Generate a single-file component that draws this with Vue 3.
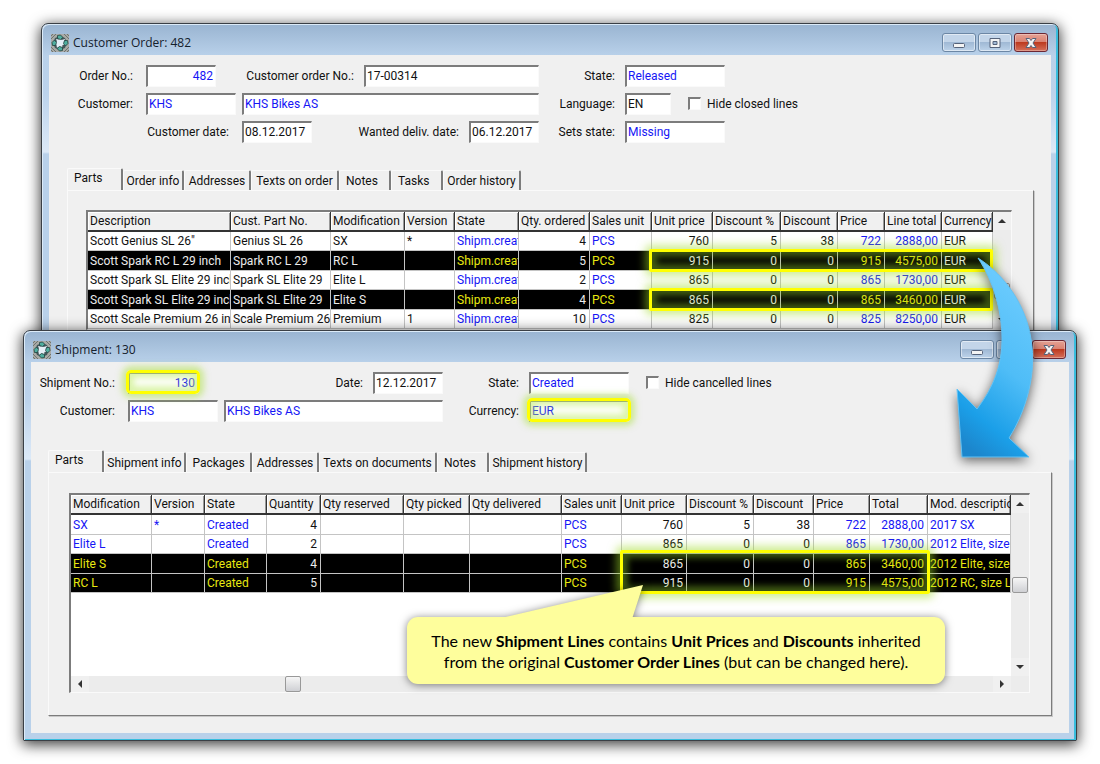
<script setup>
const orderTabs = [
  { label: 'Order info', size: 'w61' },
  { label: 'Addresses', size: 'w67' },
  { label: 'Texts on order', size: 'w88' },
  { label: 'Notes', size: 'w52 early' },
  { label: 'Tasks', size: 'w52 early' },
  { label: 'Order history', size: 'w78' },
]
const shipmentTabs = [
  { label: 'Shipment info', size: 'w82' },
  { label: 'Packages', size: 'w66' },
  { label: 'Addresses', size: 'w67' },
  { label: 'Texts on documents', size: 'w118' },
  { label: 'Notes', size: 'w52 early' },
  { label: 'Shipment history', size: 'w98' },
]

const orderColumns = [
  { title: 'Description', width: 143 },
  { title: 'Cust. Part No.', width: 100 },
  { title: 'Modification', width: 74 },
  { title: 'Version', width: 50 },
  { title: 'State', width: 64, kind: 'link' },
  { title: 'Qty. ordered', width: 71, kind: 'num' },
  { title: 'Sales unit', width: 62, kind: 'link' },
  { title: 'Unit price', width: 61, kind: 'num' },
  { title: 'Discount %', width: 68, kind: 'num' },
  { title: 'Discount', width: 57, kind: 'num' },
  { title: 'Price', width: 47, kind: 'num link' },
  { title: 'Line total', width: 57, kind: 'num link' },
  { title: 'Currency' },
]
const orderRows = [
  { cells: ['Scott Genius SL 26"', 'Genius SL 26', 'SX', '*', 'Shipm.created', '4', 'PCS', '760', '5', '38', '722', '2888,00', 'EUR'] },
  { selected: true, cells: ['Scott Spark RC L 29 inch', 'Spark RC L 29', 'RC L', '', 'Shipm.created', '5', 'PCS', '915', '0', '0', '915', '4575,00', 'EUR'] },
  { cells: ['Scott Spark SL Elite 29 inch', 'Spark SL Elite 29', 'Elite L', '', 'Shipm.created', '2', 'PCS', '865', '0', '0', '865', '1730,00', 'EUR'] },
  { selected: true, cells: ['Scott Spark SL Elite 29 inch', 'Spark SL Elite 29', 'Elite S', '', 'Shipm.created', '4', 'PCS', '865', '0', '0', '865', '3460,00', 'EUR'] },
  { cells: ['Scott Scale Premium 26 inch', 'Scale Premium 26', 'Premium', '1', 'Shipm.created', '10', 'PCS', '825', '0', '0', '825', '8250,00', 'EUR'] },
]

const shipmentColumns = [
  { title: 'Modification', width: 81, kind: 'link' },
  { title: 'Version', width: 53, kind: 'link' },
  { title: 'State', width: 62, kind: 'link' },
  { title: 'Quantity', width: 54, kind: 'num' },
  { title: 'Qty reserved', width: 83, kind: 'num' },
  { title: 'Qty picked', width: 66, kind: 'num' },
  { title: 'Qty delivered', width: 92, kind: 'num' },
  { title: 'Sales unit', width: 60, kind: 'link' },
  { title: 'Unit price', width: 65, kind: 'num' },
  { title: 'Discount %', width: 67, kind: 'num' },
  { title: 'Discount', width: 60, kind: 'num' },
  { title: 'Price', width: 56, kind: 'num link' },
  { title: 'Total', width: 58, kind: 'num link' },
  { title: 'Mod. description', kind: 'link' },
]
const shipmentRows = [
  { cells: ['SX', '*', 'Created', '4', '', '', '', 'PCS', '760', '5', '38', '722', '2888,00', '2017 SX'] },
  { cells: ['Elite L', '', 'Created', '2', '', '', '', 'PCS', '865', '0', '0', '865', '1730,00', '2012 Elite, size L'] },
  { selected: true, cells: ['Elite S', '', 'Created', '4', '', '', '', 'PCS', '865', '0', '0', '865', '3460,00', '2012 Elite, size S'] },
  { selected: true, cells: ['RC L', '', 'Created', '5', '', '', '', 'PCS', '915', '0', '0', '915', '4575,00', '2012 RC, size L'] },
]

const ringAngles = [0, 90, 180, 270]
const windowButtons = ['Minimize', 'Maximize', 'Close']
</script>

<template>
  <main class="desktop">
    <section class="window order" aria-label="Customer Order: 482">
      <header class="titlebar">
        <svg class="app-icon" viewBox="0 0 18 18" aria-hidden="true">
          <rect width="18" height="18" fill="#a9aaa6" />
          <path d="M0 5l5-5M0 13l5 5M13 0l5 5M18 13l-5 5M0 2l2-2M16 0l2 2M0 16l2 2M18 16l-2 2" stroke="#6d7472" stroke-width="1" />
          <path d="M9 2l5 2 2 5-2 5-5 2-5-2-2-5 2-5z" fill="#43575a" />
          <path d="M9 4l1.500 2L14 5l-1 3.500 1.500 2-3 .5L11 14l-2-1.500L6 14l-.5-3L3.500 9 6 7.500 5 5l3 .5z" fill="#e4eef6" />
          <g v-for="a in ringAngles" :key="a" :transform="`rotate(${a} 9 9)`">
            <path d="M6.500 1.500l3-.5 2.500 2.500L9.500 5.500 6.500 4.500z" fill="#4fae9f" stroke="#22403f" stroke-width=".8" />
          </g>
        </svg>
        <h1>Customer Order: 482</h1>
        <div class="controls">
          <button v-for="b in windowButtons" :key="b" type="button" :class="b.toLowerCase()" :aria-label="b">
            <svg viewBox="0 0 14 12" aria-hidden="true">
              <rect v-if="b === 'Minimize'" x="1.500" y="6.500" width="11" height="4" rx="1" class="glyph" />
              <path v-else-if="b === 'Maximize'" d="M2 1.500h10v9H2zM5 4.500v3h4v-3z" fill-rule="evenodd" class="glyph" />
              <path v-else d="M2 1.500h3.500L7 3.500l1.500-2H12L9 6l3 4.500H8.500L7 8.500l-1.500 2H2L5 6z" class="glyph" />
            </svg>
          </button>
        </div>
      </header>
      <div class="client">
        <form class="form" @submit.prevent>
          <div class="row">
            <label class="first w97" for="o-no">Order No.:</label>
            <input id="o-no" class="w70 blue right" value="482" />
            <label class="w148" for="o-cno">Customer order No.:</label>
            <input id="o-cno" class="w175" value="17-00314" />
            <label class="w86" for="o-state">State:</label>
            <input id="o-state" class="w100 blue" value="Released" />
          </div>
          <div class="row">
            <label class="first w97" for="o-cust">Customer:</label>
            <input id="o-cust" class="w90 blue" value="KHS" />
            <input class="w297 blue gap6" aria-label="Customer name" value="KHS Bikes AS" />
            <label class="w86" for="o-lang">Language:</label>
            <input id="o-lang" class="w46" value="EN" />
            <label class="check"><input type="checkbox" />Hide closed lines</label>
          </div>
          <div class="row">
            <label class="first w193" for="o-date">Customer date:</label>
            <input id="o-date" class="w70" value="08.12.2017" />
            <label class="w157" for="o-want">Wanted deliv. date:</label>
            <input id="o-want" class="w70" value="06.12.2017" />
            <label class="w86" for="o-sets">Sets state:</label>
            <input id="o-sets" class="w100 blue" value="Missing" />
          </div>
        </form>
        <nav class="tabs" aria-label="Order sections">
          <button type="button" class="tab active">Parts</button>
          <button v-for="t in orderTabs" :key="t.label" type="button" class="tab" :class="t.size">{{ t.label }}</button>
        </nav>
        <div class="panel">
          <div class="grid">
            <div class="sheet">
              <table>
                <colgroup>
                  <col v-for="c in orderColumns" :key="c.title" :style="c.width ? { width: c.width + 'px' } : null" />
                </colgroup>
                <thead>
                  <tr><th v-for="c in orderColumns" :key="c.title" scope="col">{{ c.title }}</th></tr>
                </thead>
                <tbody>
                  <tr v-for="(r, i) in orderRows" :key="i" :class="{ selected: r.selected }">
                    <td v-for="(v, j) in r.cells" :key="j" :class="orderColumns[j].kind">{{ v }}</td>
                  </tr>
                </tbody>
              </table>
            </div>
            <div class="vscroll">
              <button type="button" aria-label="Scroll up"><i class="up"></i></button>
              <span class="thumb"></span>
              <button type="button" aria-label="Scroll down"><i class="down"></i></button>
            </div>
            <div class="mark line-one"></div>
            <div class="mark line-two"></div>
          </div>
        </div>
      </div>
    </section>

    <section class="window shipment" aria-label="Shipment: 130">
      <header class="titlebar">
        <svg class="app-icon" viewBox="0 0 18 18" aria-hidden="true">
          <rect width="18" height="18" fill="#a9aaa6" />
          <path d="M0 5l5-5M0 13l5 5M13 0l5 5M18 13l-5 5M0 2l2-2M16 0l2 2M0 16l2 2M18 16l-2 2" stroke="#6d7472" stroke-width="1" />
          <path d="M9 2l5 2 2 5-2 5-5 2-5-2-2-5 2-5z" fill="#43575a" />
          <path d="M9 4l1.500 2L14 5l-1 3.500 1.500 2-3 .5L11 14l-2-1.500L6 14l-.5-3L3.500 9 6 7.500 5 5l3 .5z" fill="#e4eef6" />
          <g v-for="a in ringAngles" :key="a" :transform="`rotate(${a} 9 9)`">
            <path d="M6.500 1.500l3-.5 2.500 2.500L9.500 5.500 6.500 4.500z" fill="#4fae9f" stroke="#22403f" stroke-width=".8" />
          </g>
        </svg>
        <h1>Shipment: 130</h1>
        <div class="controls">
          <button v-for="b in windowButtons" :key="b" type="button" :class="b.toLowerCase()" :aria-label="b">
            <svg viewBox="0 0 14 12" aria-hidden="true">
              <rect v-if="b === 'Minimize'" x="1.500" y="6.500" width="11" height="4" rx="1" class="glyph" />
              <path v-else-if="b === 'Maximize'" d="M2 1.500h10v9H2zM5 4.500v3h4v-3z" fill-rule="evenodd" class="glyph" />
              <path v-else d="M2 1.500h3.500L7 3.500l1.500-2H12L9 6l3 4.500H8.500L7 8.500l-1.500 2H2L5 6z" class="glyph" />
            </svg>
          </button>
        </div>
      </header>
      <div class="client">
        <form class="form" @submit.prevent>
          <div class="row">
            <label class="first w97" for="s-no">Shipment No.:</label>
            <span class="marked"><input id="s-no" class="w70 blue right" value="130" /></span>
            <label class="w175" for="s-date">Date:</label>
            <input id="s-date" class="w70" value="12.12.2017" />
            <label class="w86" for="s-state">State:</label>
            <input id="s-state" class="w100 blue" value="Created" />
            <label class="check"><input type="checkbox" />Hide cancelled lines</label>
          </div>
          <div class="row">
            <label class="first w97" for="s-cust">Customer:</label>
            <input id="s-cust" class="w90 blue" value="KHS" />
            <input class="w219 blue gap6" aria-label="Customer name" value="KHS Bikes AS" />
            <label class="w86" for="s-cur">Currency:</label>
            <span class="marked"><input id="s-cur" class="w100 blue" value="EUR" /></span>
          </div>
        </form>
        <nav class="tabs" aria-label="Shipment sections">
          <button type="button" class="tab active">Parts</button>
          <button v-for="t in shipmentTabs" :key="t.label" type="button" class="tab" :class="t.size">{{ t.label }}</button>
        </nav>
        <div class="panel">
          <div class="grid">
            <div class="sheet">
              <table>
                <colgroup>
                  <col v-for="c in shipmentColumns" :key="c.title" :style="c.width ? { width: c.width + 'px' } : null" />
                </colgroup>
                <thead>
                  <tr><th v-for="c in shipmentColumns" :key="c.title" scope="col">{{ c.title }}</th></tr>
                </thead>
                <tbody>
                  <tr v-for="(r, i) in shipmentRows" :key="i" :class="{ selected: r.selected }">
                    <td v-for="(v, j) in r.cells" :key="j" :class="shipmentColumns[j].kind">{{ v }}</td>
                  </tr>
                </tbody>
              </table>
            </div>
            <div class="vscroll">
              <button type="button" aria-label="Scroll up"><i class="up"></i></button>
              <span class="thumb"></span>
              <button type="button" aria-label="Scroll down"><i class="down"></i></button>
            </div>
            <div class="hscroll">
              <button type="button" aria-label="Scroll left"><i class="left"></i></button>
              <span class="thumb"></span>
              <button type="button" aria-label="Scroll right"><i class="next"></i></button>
            </div>
            <div class="mark block"></div>
          </div>
        </div>
      </div>
    </section>

    <svg class="arrow" viewBox="0 0 120 240" aria-hidden="true">
      <defs>
        <linearGradient id="arrow-fill" x1=".6" y1="0" x2=".3" y2="1">
          <stop offset="0" stop-color="#6fcdff" />
          <stop offset=".5" stop-color="#4fbdf7" />
          <stop offset=".82" stop-color="#1b9fe8" />
          <stop offset="1" stop-color="#1c86cc" />
        </linearGradient>
      </defs>
      <path
        d="M38 18C66 36 86 66 91 99C97 134 86 171 69 198L89 217H22L17 149L37 169C53 148 62 126 62 99C62 72 54 42 38 18Z"
        fill="url(#arrow-fill)" stroke="#62c2f5" stroke-width="1" stroke-linejoin="round" />
    </svg>

    <aside class="callout">
      <svg class="tail" viewBox="0 0 146 34" aria-hidden="true"><path d="M0 34L146 0L135 34Z" fill="#fefe9c" /></svg>
      <p>The new <b>Shipment Lines</b> contains <b>Unit Prices</b> and <b>Discounts</b> inherited<br />from the original <b>Customer Order Lines</b> (but can be changed here).</p>
    </aside>
  </main>
</template>

<style>
body {
  margin: 0;
  background: #fff;
}
</style>

<style scoped>
.desktop {
  position: relative;
  min-height: 764px;
  overflow: hidden;
  font: 12px/16px Roboto, "Liberation Sans", sans-serif;
  color: #111;
}
.desktop *,
.desktop *::before,
.desktop *::after {
  box-sizing: border-box;
}
.window {
  position: absolute;
  border: 1px solid #3a3f45;
  border-radius: 7px 7px 1px 1px;
  padding: 0 7px 7px;
  background: linear-gradient(#99b4d1 0, #b9d1ea 32px, #bcd3ec 70px, #dce9f7 128px, #b9d1ea 130px);
  box-shadow: 0 3px 14px 1px rgba(0, 0, 0, 0.75), inset 1px 1px 0 #dcebf8, inset -2px -1px 0 #38bddd;
}
.order {
  top: 23px;
  left: 41px;
  right: 41px;
}
.shipment {
  top: 330px;
  left: 23px;
  right: 23px;
}
.titlebar {
  display: flex;
  align-items: center;
  height: 31px;
  padding: 6px 3px 0 2px;
}
.app-icon {
  width: 18px;
  height: 18px;
}
h1 {
  flex: 1;
  margin: 0 4px;
  font: 12px/18px "Open Sans", "Noto Sans", sans-serif;
  color: #14202c;
}
.controls {
  display: flex;
  gap: 2px;
}
.controls button {
  display: flex;
  align-items: center;
  justify-content: center;
  width: 34px;
  height: 19px;
  padding: 0;
  border: 1px solid #6c87a5;
  border-radius: 3px;
  background: linear-gradient(#c3d5e9 0 48%, #a0b9d5 50%, #bdd3ea);
  box-shadow: inset 0 0 0 1px rgba(255, 255, 255, 0.5);
}
.controls svg {
  width: 14px;
  height: 12px;
}
.glyph {
  fill: #f4f4f4;
  stroke: #56637a;
}
.controls .close {
  border-color: #6b2733;
  background: linear-gradient(#e5a294 0, #d98171 48%, #bd3a1f 50%, #d5705b);
  box-shadow: inset 0 0 0 1px rgba(255, 255, 255, 0.3);
}
.client {
  background: #f0f0f0;
}
.form {
  display: flex;
  flex-direction: column;
  gap: 6px;
  padding: 10px 0 25px;
}
.shipment .form {
  padding-bottom: 28px;
}
.row {
  display: flex;
  height: 22px;
}
.row label {
  flex: none;
  padding: 3px 10px 0 0;
  text-align: right;
}
.row .first {
  padding-right: 13px;
}
.row input {
  flex: none;
  height: 22px;
  margin: 0;
  padding: 0 3px 2px 1px;
  border: solid;
  border-width: 2px 1px 1px 2px;
  border-color: #7c7c7c #fafafa #fafafa #7c7c7c;
  border-radius: 0;
  background: #fff;
  color: #111;
  font: inherit;
}
.row .blue {
  color: #1616f5;
}
.row .right {
  padding-right: 2px;
  text-align: right;
}
.row .gap6 {
  margin-left: 6px;
}
.row .check {
  display: flex;
  align-items: flex-start;
  gap: 6px;
  padding: 3px 0 0 17px;
}
.check input {
  appearance: none;
  width: 13px;
  height: 13px;
  margin-top: 1px;
  padding: 0;
}
.marked {
  position: relative;
  display: flex;
}
.marked::after {
  content: "";
  position: absolute;
  inset: -2px -2px 0;
  border: 3px solid #ff0;
  border-radius: 5px;
  box-shadow: 0 0 6px 4px rgba(170, 225, 60, 0.5), inset 0 0 6px 5px rgba(190, 235, 100, 0.55);
  pointer-events: none;
}
.w46 { width: 46px; }
.w70 { width: 70px; }
.w86 { width: 86px; }
.w90 { width: 90px; }
.w97 { width: 97px; }
.w100 { width: 100px; }
.w148 { width: 148px; }
.w157 { width: 157px; }
.w175 { width: 175px; }
.w193 { width: 193px; }
.w219 { width: 219px; }
.w297 { width: 297px; }
.tabs {
  display: flex;
  align-items: flex-end;
  margin-left: 18px;
}
.shipment .tabs {
  margin-left: 17px;
}
.tab {
  height: 20px;
  padding: 0;
  border: solid;
  border-width: 1px 2px 0 1px;
  border-color: #fafafa #7c7c7c #fafafa #fafafa;
  border-radius: 2px 2px 0 0;
  background: #f0f0f0;
  color: #111;
  font: inherit;
  text-align: center;
}
.tab.active {
  width: 56px;
  height: 22px;
  padding: 0 0 3px 6px;
  text-align: left;
}
.tab.early {
  padding-left: 6px;
  text-align: left;
}
.w52 { width: 52px; }
.w61 { width: 61px; }
.w66 { width: 66px; }
.w67 { width: 67px; }
.w78 { width: 78px; }
.w82 { width: 82px; }
.w88 { width: 88px; }
.w98 { width: 98px; }
.w118 { width: 118px; }
.panel {
  margin: 0 17px 0 18px;
  padding: 19px 21px 22px 18px;
  border: 1px solid;
  border-color: #fafafa #7c7c7c #7c7c7c #fafafa;
  box-shadow: 1px 1px 0 #c8c8c8;
}
.shipment .panel {
  margin: 0 17px;
  padding: 20px 21px 22px 20px;
}
.shipment .client {
  padding-bottom: 17px;
}
.grid {
  position: relative;
  display: grid;
  grid-template-columns: 1fr 18px;
  border: solid;
  border-width: 2px 1px 1px 2px;
  border-color: #7c7c7c #fafafa #fafafa #7c7c7c;
  background: #ececec;
}
.sheet {
  min-width: 0;
  background: #fff;
}
.shipment .sheet {
  min-height: 181px;
}
table {
  width: 100%;
  border-collapse: separate;
  border-spacing: 0;
  table-layout: fixed;
}
th,
td {
  overflow: hidden;
  padding: 0 0 0 2px;
  white-space: nowrap;
  text-align: left;
  font-weight: 400;
}
th {
  height: 20px;
  border-right: 1px solid #333;
  border-bottom: 2px solid #333;
  background: #f0f0f0;
  box-shadow: inset 1px 1px 0 #fff, inset -1px 0 0 #999;
}
td {
  height: 20px;
  border-right: 1px solid #c4c4c4;
  border-bottom: 1px solid #c4c4c4;
  line-height: 18px;
}
tr:nth-child(odd) td {
  height: 19px;
}
.shipment tr:nth-child(odd) td {
  height: 20px;
}
.shipment tr:nth-child(even) td {
  height: 19px;
}
.link {
  color: #1616f5;
}
.num {
  padding-right: 3px;
  text-align: right;
}
.selected td {
  background: #000;
  color: #ececec;
}
.selected .link {
  color: #e8e810;
}
.vscroll,
.hscroll {
  display: flex;
  background: #ececec;
}
.vscroll {
  flex-direction: column;
  align-items: center;
}
.hscroll {
  height: 16px;
}
.vscroll button,
.hscroll button {
  display: flex;
  align-items: center;
  justify-content: center;
  width: 18px;
  height: 18px;
  padding: 0;
  border: 0;
  background: #f0f0f0;
}
.hscroll button {
  height: 16px;
}
.vscroll button:last-child,
.hscroll button:last-child {
  margin: auto 0 0;
}
.hscroll button:last-child {
  margin: 0 0 0 auto;
}
.vscroll i,
.hscroll i {
  border: 4px solid transparent;
}
.vscroll .up {
  border-top: 0;
  border-bottom-color: #333;
}
.vscroll .down {
  border-bottom: 0;
  border-top-color: #333;
}
.hscroll .left {
  border-left: 0;
  border-right-color: #333;
}
.hscroll .next {
  border-right: 0;
  border-left-color: #333;
}
.thumb {
  width: 16px;
  height: 16px;
  margin-top: 53px;
  border: 1px solid #999;
  border-radius: 2px;
  background: linear-gradient(#f6f6f6, #cfd0d4);
}
.shipment .vscroll .thumb {
  margin-top: 64px;
}
.shipment .hscroll .thumb {
  margin: 0 0 0 196px;
}
.mark {
  position: absolute;
  border: 3px solid #ff0;
  border-radius: 2px;
  box-shadow: 0 0 8px 4px rgba(160, 220, 40, 0.5), inset 0 0 6px 5px rgba(140, 200, 40, 0.45);
  pointer-events: none;
}
.line-one,
.line-two {
  left: 561px;
  right: 18px;
  height: 23px;
}
.line-one {
  top: 37px;
}
.line-two {
  top: 76px;
}
.block {
  top: 55px;
  left: 549px;
  width: 310px;
  height: 44px;
}
.arrow {
  position: absolute;
  top: 240px;
  left: 940px;
  width: 120px;
  height: 240px;
  filter: drop-shadow(0 3px 6px rgba(0, 0, 0, 0.6));
}
.callout {
  position: absolute;
  top: 617px;
  left: 407px;
  width: 538px;
  padding: 13px 0 12px;
  border-radius: 11px;
  background: #fefe9c;
  filter: drop-shadow(0 1px 4px rgba(0, 0, 0, 0.5));
  color: #000;
  font: 16px/21px Lato, sans-serif;
  text-align: center;
}
.callout p {
  margin: 0;
  white-space: nowrap;
}
.tail {
  position: absolute;
  top: -32px;
  left: 90px;
  width: 146px;
  height: 34px;
}
</style>
